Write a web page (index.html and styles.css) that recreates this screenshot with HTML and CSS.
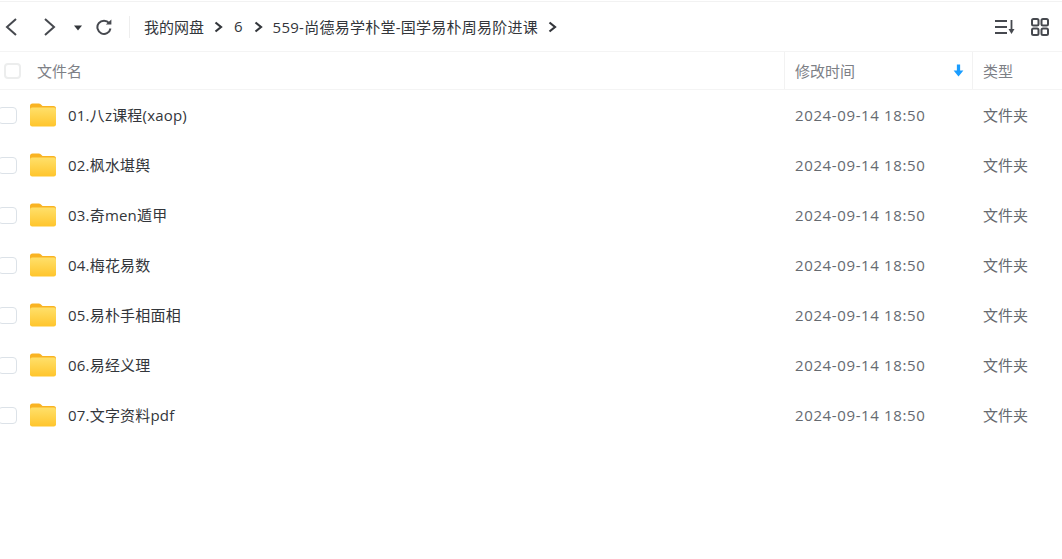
FILE: index.html
```html
<!DOCTYPE html>
<html lang="zh-CN">
<head>
    <meta charset="UTF-8">
    <title>我的网盘</title>
    <link rel="stylesheet" href="styles.css">
</head>
<body>
    <!-- Toolbar -->
    <div class="toolbar">
        <svg class="icon-back" width="14" height="20" viewBox="0 0 14 20"><path d="M12 2 L3 10 L12 18" /></svg>
        <svg class="icon-forward" width="14" height="20" viewBox="0 0 14 20"><path d="M2 2 L11 10 L2 18" /></svg>
        <svg class="icon-drop" width="8" height="6" viewBox="0 0 8 6"><path d="M0 0.5 H8 L4 5.5 Z" /></svg>
        <svg class="icon-refresh" width="16" height="16" viewBox="0 0 16 16"><path d="M13.2 4.2 A6.6 6.6 0 1 0 14.5 9.5" /><path class="fill" d="M9.8 5.6 H15.4 V0.4 Z" /></svg>
        <div class="divider"></div>
        <div class="crumbs">
            <span>我的网盘</span>
            <svg class="sep" width="9" height="12" viewBox="0 0 9 12"><path d="M1.5 1.5 L7 6 L1.5 10.5" /></svg>
            <span class="crumb-num">6</span>
            <svg class="sep" width="9" height="12" viewBox="0 0 9 12"><path d="M1.5 1.5 L7 6 L1.5 10.5" /></svg>
            <span class="crumb-long">559-尚德易学朴堂-国学易朴周易阶进课</span>
            <svg class="sep" width="9" height="12" viewBox="0 0 9 12"><path d="M1.5 1.5 L7 6 L1.5 10.5" /></svg>
        </div>
        <div class="tools">
            <svg class="icon-sort" width="21" height="16" viewBox="0 0 21 16">
                <path d="M0 2 H12 M0 8 H12 M0 14 H12 M16.5 1 V10" />
                <path class="fill" d="M13.5 10 H19.5 L16.5 15 Z" />
            </svg>
            <svg class="icon-grid" width="18" height="18" viewBox="0 0 18 18">
                <rect x="1" y="1" width="6.5" height="6.5" rx="1.5" />
                <rect x="10.5" y="1" width="6.5" height="6.5" rx="1.5" />
                <rect x="1" y="10.5" width="6.5" height="6.5" rx="1.5" />
                <rect x="10.5" y="10.5" width="6.5" height="6.5" rx="1.5" />
            </svg>
        </div>
    </div>

    <!-- Column header -->
    <div class="head">
        <div class="col-name">
            <span class="check head-check"></span>
            <span>文件名</span>
        </div>
        <div class="col-time">
            <span>修改时间</span>
            <svg width="11" height="13" viewBox="0 0 10 12"><path d="M3.5 0.5 H6.5 V6 H9.5 L5 11.5 L0.5 6 H3.5 Z" /></svg>
        </div>
        <div class="col-type">类型</div>
    </div>

    <!-- File rows -->
    <svg class="defs" width="0" height="0">
        <defs>
            <linearGradient id="folder-fill" x1="0" y1="0" x2="0" y2="1">
                <stop offset="0" stop-color="#ffe06a" />
                <stop offset="1" stop-color="#ffc52c" />
            </linearGradient>
        </defs>
    </svg>
    <div class="rows" id="rows"></div>

    <script>
        const files = ['01.八z课程(xaop)', '02.枫水堪舆', '03.奇men遁甲', '04.梅花易数', '05.易朴手相面相', '06.易经义理', '07.文字资料pdf'];
        const rows = document.getElementById('rows');

        files.forEach(name => {
            const row = document.createElement('div');
            row.classList.add('row');
            row.innerHTML = `
                <div class="col-name">
                    <span class="check"></span>
                    <svg class="folder" width="26" height="24" viewBox="0 0 26 24">
                        <path class="folder-back" d="M0 3 Q0 0.5 2.5 0.5 H9 Q10.5 0.5 11.5 2 L12.5 3 H23.5 Q26 3 26 5.5 V10 H0 Z" />
                        <rect class="folder-front" x="0" y="4.5" width="26" height="19" rx="2.2" />
                    </svg>
                    <span class="file-name">${name}</span>
                </div>
                <div class="col-time"><span class="time">2024-09-14 18:50</span></div>
                <div class="col-type"><span class="cell">文件夹</span></div>
            `;
            rows.appendChild(row);
        });
    </script>
</body>
</html>
```

FILE: styles.css
```css
/* Global Styles */
body {
    margin: 0;
    background-color: #fff;
    color: #3f4248;
    font-family: 'Open Sans', 'Noto Sans CJK SC', sans-serif;
    font-size: 15px;
    overflow: hidden;
}

svg path,
svg rect {
    fill: none;
    stroke: currentColor;
}
svg .fill {
    fill: currentColor;
    stroke: none;
}
.defs {
    position: absolute;
}

/* Toolbar */
.toolbar {
    height: 49px;
    margin-top: 1px;
    border-top: 1px solid #f2f2f2;
    border-bottom: 1px solid #f4f4f4;
    display: flex;
    align-items: center;
    padding-left: 4px;
    padding-right: 13px;
    color: #46494f;
}
.toolbar path {
    stroke-width: 2;
}
.icon-forward {
    margin-left: 25px;
}
.icon-drop {
    margin-left: 17px;
    margin-top: 2px;
}
.icon-drop path {
    fill: #33363b;
    stroke: none;
}
.icon-refresh {
    margin-left: 14px;
}
.divider {
    width: 1px;
    height: 22px;
    background-color: #eeeeee;
    margin-left: 17px;
}
.crumbs {
    display: flex;
    align-items: center;
    gap: 10px;
    margin-left: 14px;
    color: #33363b;
    font-size: 15px;
}
.crumbs span {
    margin-bottom: 1px;
}
.crumb-num {
    margin-left: 1px;
    margin-right: 1px;
}
.crumb-long {
    letter-spacing: 0.25px;
}
.crumbs .sep path {
    stroke-width: 2.2;
}
.tools {
    margin-left: auto;
    display: flex;
    align-items: center;
    gap: 15px;
}
.icon-sort path {
    stroke-width: 1.8;
}
.icon-grid rect {
    stroke-width: 2;
}

/* Table */
.head,
.row {
    display: grid;
    grid-template-columns: 784px 188px 1fr;
    align-items: center;
}
.head {
    height: 37px;
    border-bottom: 1px solid #f4f4f4;
    color: #7d8086;
    font-size: 15px;
}
.head .col-time,
.head .col-type {
    height: 100%;
    box-sizing: border-box;
    border-left: 1px solid #f2f2f2;
    display: flex;
    align-items: center;
}
.head .col-time {
    justify-content: space-between;
    padding-left: 10px;
    padding-right: 8px;
}
.head .col-time svg path {
    fill: #1a9dff;
    stroke: none;
}
.head .col-type {
    padding-left: 10px;
}
.col-name {
    display: flex;
    align-items: center;
}
.row {
    height: 50px;
}
.row .col-time,
.row .col-type {
    padding-left: 11px;
    color: #666a70;
}
.cell,
.file-name {
    display: block;
    margin-bottom: 2px;
}
.time {
    letter-spacing: 0.62px;
}
.file-name {
    color: #33363b;
    letter-spacing: 0.2px;
}

/* Checkbox */
.check {
    box-sizing: border-box;
    width: 19px;
    height: 17px;
    margin-left: -2px;
    border: 1px solid #dce2e8;
    border-radius: 4px;
    background-color: #fff;
}
.head-check {
    width: 17px;
    height: 16px;
    margin-left: 4px;
    margin-right: 16px;
    border: 2px solid #eceded;
}

/* Folder icon */
.folder {
    margin-left: 13px;
    margin-right: 12px;
}
.folder-back {
    fill: #f9b322;
    stroke: none;
}
.folder-front {
    fill: url(#folder-fill);
    stroke: none;
}
```
